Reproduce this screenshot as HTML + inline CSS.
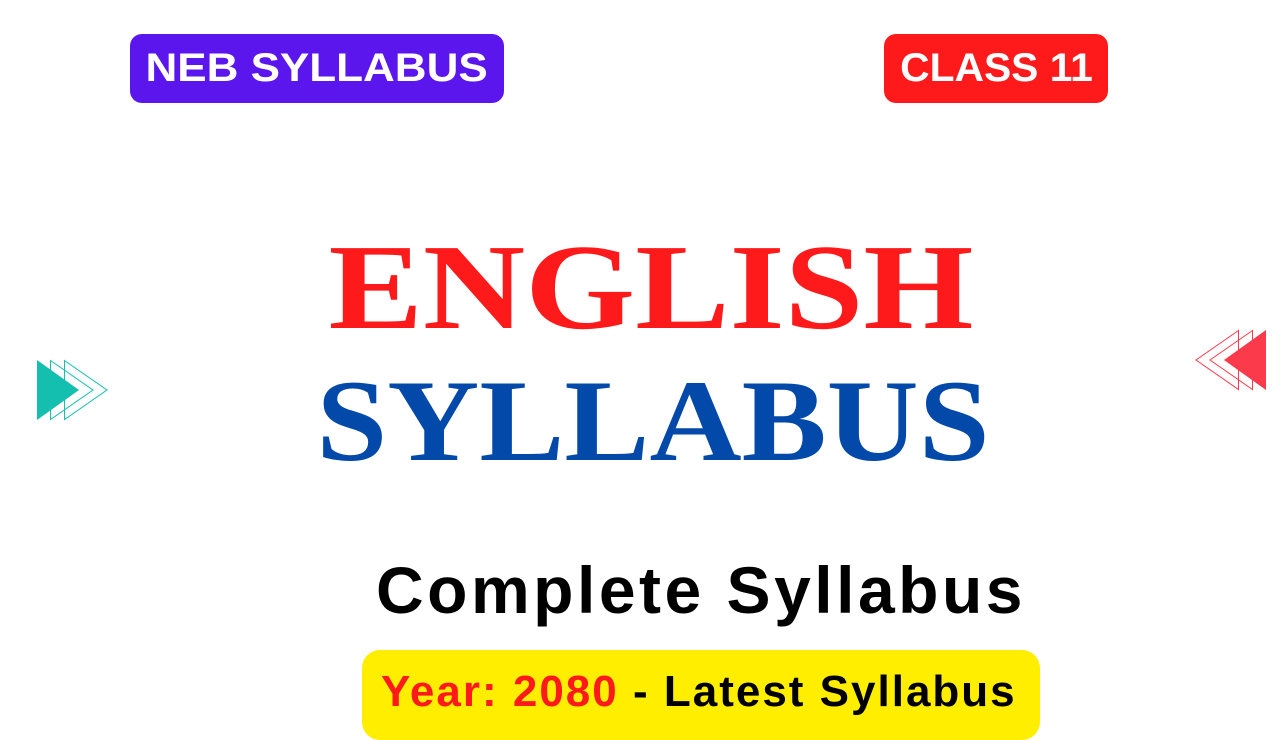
<!DOCTYPE html>
<html><head><style>
body{margin:0;width:1280px;height:720px;background:#fff;position:relative;overflow:hidden;font-family:"Liberation Sans",sans-serif}
.b{position:absolute;color:#fff;font-weight:bold;border-radius:12px;display:flex;align-items:center;justify-content:center;font-size:40px}
.t{position:absolute;left:0;width:1280px;text-align:center;font-family:"Liberation Serif",serif;font-weight:bold;line-height:1}
</style></head><body>
<div class="b" style="left:130px;top:34px;width:374px;height:69px;background:#5b16ee"><span style="display:inline-block;transform:scaleX(1.1)">NEB SYLLABUS</span></div>
<div class="b" style="left:884px;top:34px;width:224px;height:69px;background:#fe1a1a"><span style="display:inline-block;transform:scaleX(1.02)">CLASS 11</span></div>
<div class="t" style="top:227px;left:11px;font-size:122px;color:#fe1a1a;transform:scaleX(1.16)">ENGLISH</div>
<div class="t" style="top:363px;left:13px;font-size:117px;color:#0249aa;transform:scaleX(1.09)">SYLLABUS</div>
<div style="position:absolute;left:376px;top:552px;font-size:66px;font-weight:bold;color:#000;letter-spacing:3.5px">Complete Syllabus</div>
<div style="position:absolute;left:362px;top:650px;width:678px;height:90px;background:#ffee00;border-radius:18px;"></div>
<div style="position:absolute;left:381px;top:667px;font-size:44px;font-weight:bold;color:#000;letter-spacing:2px"><span style="color:#fe1a1a">Year: 2080</span> - Latest Syllabus</div>
<svg style="position:absolute;left:0;top:0" width="1280" height="720">
<polygon points="37,360 79,390 37,420" fill="#14bfb0"/>
<polygon points="50.5,360.5 93,390 50.5,419.5" fill="none" stroke="#14bfb0" stroke-width="1"/>
<polygon points="64.5,360.5 107,390 64.5,419.5" fill="none" stroke="#14bfb0" stroke-width="1"/>
<polygon points="1266,330 1224,360 1266,390" fill="#fb3a4b"/>
<polygon points="1252.5,330.5 1210,360 1252.5,389.5" fill="none" stroke="#fb3a4b" stroke-width="1"/>
<polygon points="1238.5,330.5 1196,360 1238.5,389.5" fill="none" stroke="#fb3a4b" stroke-width="1"/>
</svg>
</body></html>
